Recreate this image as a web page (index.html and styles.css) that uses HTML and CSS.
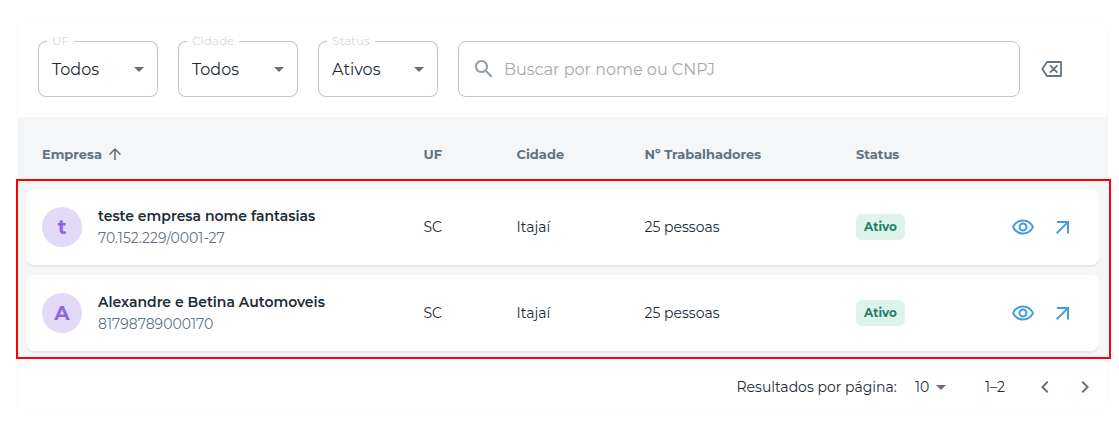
FILE: index.html
```
<!DOCTYPE html>
<html lang="pt-BR">
<head>
<meta charset="utf-8">
<title>Empresas</title>
<link rel="stylesheet" href="styles.css">
</head>
<body>
<svg class="defs" width="0" height="0" aria-hidden="true">
  <symbol id="caret" viewBox="0 0 24 24"><path d="M7 10l5 5 5-5z"/></symbol>
  <symbol id="search" viewBox="0 0 24 24"><path d="M15.5 14h-.79l-.28-.27C15.41 12.59 16 11.11 16 9.5 16 5.91 13.09 3 9.5 3S3 5.91 3 9.5 5.91 16 9.5 16c1.61 0 3.09-.59 4.23-1.57l.27.28v.79l5 4.99L20.49 19l-4.99-5zm-6 0C7.01 14 5 11.99 5 9.5S7.01 5 9.5 5 14 7.01 14 9.5 11.99 14 9.5 14z"/></symbol>
  <symbol id="up" viewBox="0 0 24 24"><path d="M4 12l1.41 1.41L11 7.83V20h2V7.83l5.58 5.59L20 12l-8-8-8 8z"/></symbol>
  <symbol id="eye" viewBox="0 0 24 24"><path d="M12 6.5c3.79 0 7.17 2.13 8.82 5.5-1.65 3.37-5.02 5.5-8.82 5.5S4.83 15.37 3.18 12C4.83 8.63 8.21 6.5 12 6.5m0-2C7 4.500 2.730 7.610 1 12c1.730 4.390 6 7.500 11 7.500s9.270-3.110 11-7.500c-1.730-4.390-6-7.500-11-7.500zm0 5c1.380 0 2.500 1.120 2.500 2.500s-1.120 2.500-2.500 2.500-2.500-1.120-2.500-2.500 1.120-2.500 2.500-2.500m0-2c-2.480 0-4.500 2.020-4.500 4.500s2.020 4.500 4.500 4.500 4.500-2.020 4.500-4.500-2.020-4.500-4.500-4.500z"/></symbol>
  <symbol id="open" viewBox="0 0 20 20"><path d="M4 5H15V16.500M14.600 5.400L3.700 16.300" fill="none" stroke="currentColor" stroke-width="2"/></symbol>
  <symbol id="prev" viewBox="0 0 24 24"><path d="M15.410 7.410L14 6l-6 6 6 6 1.410-1.410L10.830 12z"/></symbol>
  <symbol id="next" viewBox="0 0 24 24"><path d="M10 6L8.590 7.410 13.170 12l-4.580 4.590L10 18l6-6z"/></symbol>
</svg>
<main class="card">
  <form class="filters">
    <fieldset class="select"><legend>UF</legend><span class="value">Todos</span><svg class="icon caret"><use href="#caret"/></svg></fieldset>
    <fieldset class="select"><legend>Cidade</legend><span class="value">Todos</span><svg class="icon caret"><use href="#caret"/></svg></fieldset>
    <fieldset class="select"><legend>Status</legend><span class="value">Ativos</span><svg class="icon caret"><use href="#caret"/></svg></fieldset>
    <div class="search"><svg class="icon"><use href="#search"/></svg><span class="placeholder">Buscar por nome ou CNPJ</span></div>
    <svg class="clear" viewBox="0 0 22 18"><path d="M7 2H21v14H7L2.300 9z M10 5.300l7.400 7.400M17.400 5.300l-7.400 7.400"/></svg>
  </form>
  <section class="table">
    <div class="grid head">
      <div class="sort"><span>Empresa</span><svg class="icon up"><use href="#up"/></svg></div>
      <div>UF</div><div>Cidade</div><div>Nº Trabalhadores</div><div>Status</div>
    </div>
    <div class="rows">
      <article class="grid row">
        <div class="company"><span class="avatar">t</span><div><div class="name">teste empresa nome fantasias</div><div class="doc">70.152.229/0001-27</div></div></div>
        <div>SC</div><div>Itajaí</div><div>25 pessoas</div>
        <div><span class="badge">Ativo</span></div>
        <div class="actions"><svg class="icon"><use href="#eye"/></svg><svg class="icon open"><use href="#open"/></svg></div>
      </article>
      <article class="grid row">
        <div class="company"><span class="avatar">A</span><div><div class="name">Alexandre e Betina Automoveis</div><div class="doc">81798789000170</div></div></div>
        <div>SC</div><div>Itajaí</div><div>25 pessoas</div>
        <div><span class="badge">Ativo</span></div>
        <div class="actions"><svg class="icon"><use href="#eye"/></svg><svg class="icon open"><use href="#open"/></svg></div>
      </article>
    </div>
  </section>
  <footer class="pager">
    <span class="per-page">Resultados por página:</span>
    <span class="size">10</span><svg class="icon caret"><use href="#caret"/></svg>
    <span class="range">1–2</span>
    <svg class="icon prev"><use href="#prev"/></svg><svg class="icon"><use href="#next"/></svg>
  </footer>
</main>
</body>
</html>
```
FILE: styles.css
```
* { box-sizing: border-box; }
body { margin: 0; padding: 20px 11px 0 17px; background: #fff; font-family: Montserrat, Inter, sans-serif; color: #212b36; }
.defs { display: block; height: 0; }
.icon { display: block; width: 24px; height: 24px; flex: none; fill: currentColor; }
.card { width: 1091px; height: 394px; border: 1px solid #f7f8f9; border-radius: 10px; }
.filters { height: 96px; margin: 0; padding: 20px 0 20px 20px; display: flex; gap: 20px; }
.select { position: relative; width: 120px; height: 56px; margin: 0; padding: 0 7px 0 14px; border: 0; border-radius: 8px; box-shadow: inset 0 0 0 1px #c4c4c4; flex: none; display: flex; align-items: center; justify-content: space-between; }
.select legend { position: absolute; top: -7px; left: 9px; padding: 0 5px; background: #fff; font-size: 12px; line-height: 14px; color: #d5dade; }
.value { font-size: 16px; font-weight: 400; white-space: nowrap; }
.caret { color: #6f6f6f; }
.search { width: 562px; height: 56px; padding-left: 13px; border: 1px solid #c4c4c4; border-radius: 8px; display: flex; align-items: center; gap: 8px; color: #919eab; }
.placeholder { font-size: 16px; font-weight: 400; color: #a6aaae; white-space: nowrap; }
.clear { width: 22px; height: 18px; align-self: center; fill: none; stroke: #637381; stroke-width: 1.8; stroke-linejoin: round; }
.table { height: 242px; background: #f4f6f8; }
.grid { display: grid; grid-template-columns: 381.500px 93px 128px 211.500px 155px 1fr; align-items: center; }
.head { height: 62px; padding: 12px 8px 0 24px; font-size: 13px; font-weight: 700; line-height: 20px; color: #637381; }
.sort { display: flex; align-items: center; gap: 4px; }
.up { width: 18px; height: 18px; color: #666; }
.rows { width: 1095px; height: 180px; margin-left: -2px; padding: 8px 10px 0 8px; border: 2px solid #f00; display: flex; flex-direction: column; gap: 10px; position: relative; }
.row { height: 76px; padding-left: 16px; background: #fff; border-radius: 8px; box-shadow: 0 2px 0 #e5e8eb; font-size: 14px; font-weight: 400; line-height: 22px; }
.company { display: flex; align-items: center; gap: 16px; white-space: nowrap; }
.avatar { width: 40px; height: 40px; border-radius: 50%; background: #e3daf7; color: #8e66e3; display: grid; place-items: center; font-size: 20px; font-weight: 700; }
.name { font-weight: 600; }
.doc { color: #637381; }
.badge { display: flex; width: 49px; height: 26px; align-items: center; justify-content: center; background: #def3ea; border-radius: 6px; color: #1f7f68; font-size: 12px; font-weight: 700; }
.actions { display: flex; gap: 18px; align-items: center; color: #419ddd; }
.open { width: 20px; height: 20px; }
.pager { height: 54px; padding-top: 2px; display: flex; align-items: center; padding-left: 718.500px; font-size: 14px; font-weight: 400; white-space: nowrap; }
.per-page { width: 178.500px; }
.size { width: 14px; }
.range { width: 48px; margin-left: 32px; }
.pager .prev { margin-right: 16px; }
.pager > .icon:not(.caret) { color: #637381; }
```
